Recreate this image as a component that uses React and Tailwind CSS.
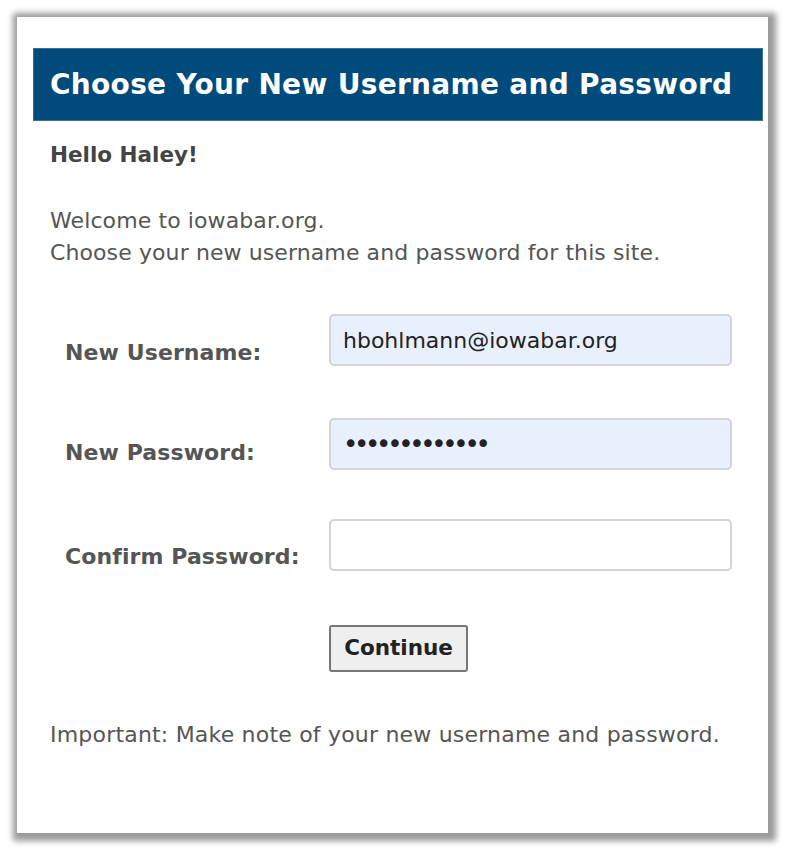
import React, { useState } from 'react';

const fieldClass =
  'w-[403px] h-[52px] rounded-[5px] border-2 border-[#d4d4d4] px-[12px] text-[#222] outline-none';

const labelClass = 'w-[264px] leading-[26px] font-bold text-[22px] text-[#555] tracking-[0.1px]';

const App = () => {
  const [username, setUsername] = useState('hbohlmann@iowabar.org');
  const [password, setPassword] = useState('aaaaaaaaaaaaa');
  const [confirm, setConfirm] = useState('');

  return (
    <div className="min-h-screen bg-white pt-[17px] pl-[17px] font-['DejaVu_Sans',Verdana,sans-serif]">
      <div className="w-[751px] h-[816px] bg-white shadow-[2px_2px_6px_6px_rgba(0,0,0,0.4)] pt-[31px] pl-[16px] pr-[5px]">
        {/* title bar */}
        <div className="h-[73px] bg-[#004a7c] border border-[#3b6f98] flex items-center pl-[16px]">
          <h1 className="text-white font-bold text-[28px] tracking-[0.3px]">
            Choose Your New Username and Password
          </h1>
        </div>

        <div className="pl-[17px] text-[#555]">
          <p className="mt-[22px] font-bold text-[21.5px] text-[#444] leading-[24px]">Hello Haley!</p>

          <div className="mt-[38px] text-[22px] leading-[32px] tracking-[0.1px]">
            <p>Welcome to iowabar.org.</p>
            <p>Choose your new username and password for this site.</p>
          </div>

          {/* credentials form */}
          <div className="mt-[45px] pl-[15px]">
            <div className="flex items-start">
              <label className={labelClass + ' mt-[26px]'}>New Username:</label>
              <input
                className={fieldClass + ' bg-[#e8f0fe] text-[22px]'}
                value={username}
                onChange={(e) => setUsername(e.target.value)}
              />
            </div>

            <div className="flex items-start mt-[52px]">
              <label className={labelClass + ' mt-[22px]'}>New Password:</label>
              <input
                type="password"
                className={fieldClass + ' bg-[#e8f0fe] text-[26px] tracking-[-4.3px]'}
                value={password}
                onChange={(e) => setPassword(e.target.value)}
              />
            </div>

            <div className="flex items-start mt-[49px]">
              <label className={labelClass + ' mt-[25px]'}>Confirm Password:</label>
              <input
                type="password"
                className={fieldClass + ' bg-white text-[20px]'}
                value={confirm}
                onChange={(e) => setConfirm(e.target.value)}
              />
            </div>
          </div>

          <div className="mt-[54px] pl-[279px]">
            <button className="w-[139px] h-[47px] bg-[#efefef] border-2 border-[#767676] rounded-[3px] font-bold text-[21.5px] text-[#222]">
              Continue
            </button>
          </div>

          <p className="mt-[46px] text-[22px] tracking-[0.2px]">
            Important: Make note of your new username and password.
          </p>
        </div>
      </div>
    </div>
  );
};

export default App;
